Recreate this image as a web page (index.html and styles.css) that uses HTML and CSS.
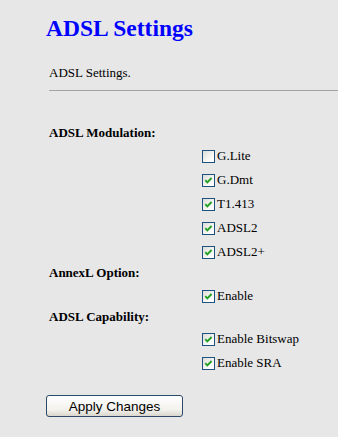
FILE: index.html
```html
<!DOCTYPE html>
<html lang="en">

<head>
    <meta charset="UTF-8">
    <title>ADSL Settings</title>
    <link rel="stylesheet" href="styles.css">
</head>

<body>
    <div class="page">
        <h1 class="title">ADSL Settings</h1>
        <p class="intro">ADSL Settings.</p>
        <div class="rule"></div>

        <form class="settings">
            <div class="field-label">ADSL Modulation:</div>
            <div class="options first">
                <label class="opt"><span class="box"></span>G.Lite</label>
                <label class="opt"><span class="box"><svg viewBox="0 0 11 11"><path d="M2.3 5.2 L4.3 7.3 L8.6 3"/></svg></span>G.Dmt</label>
                <label class="opt"><span class="box"><svg viewBox="0 0 11 11"><path d="M2.3 5.2 L4.3 7.3 L8.6 3"/></svg></span>T1.413</label>
                <label class="opt"><span class="box"><svg viewBox="0 0 11 11"><path d="M2.3 5.2 L4.3 7.3 L8.6 3"/></svg></span>ADSL2</label>
                <label class="opt"><span class="box"><svg viewBox="0 0 11 11"><path d="M2.3 5.2 L4.3 7.3 L8.6 3"/></svg></span>ADSL2+</label>
            </div>

            <div class="field-label short">AnnexL Option:</div>
            <div class="options">
                <label class="opt"><span class="box"><svg viewBox="0 0 11 11"><path d="M2.3 5.2 L4.3 7.3 L8.6 3"/></svg></span>Enable</label>
            </div>

            <div class="field-label short">ADSL Capability:</div>
            <div class="options tight">
                <label class="opt"><span class="box"><svg viewBox="0 0 11 11"><path d="M2.3 5.2 L4.3 7.3 L8.6 3"/></svg></span>Enable Bitswap</label>
                <label class="opt"><span class="box"><svg viewBox="0 0 11 11"><path d="M2.3 5.2 L4.3 7.3 L8.6 3"/></svg></span>Enable SRA</label>
            </div>

            <button type="button" class="apply">Apply Changes</button>
        </form>
    </div>
</body>

</html>
```

FILE: styles.css
```css
body {
    margin: 0;
    background-color: #e7e7e7;
    font-family: "Liberation Serif", "Times New Roman", serif;
    font-size: 13px;
    color: #000;
}

.page {
    padding: 15px 0 0 49px;
}

.title {
    margin: 0 0 0 -3px;
    font-size: 23.5px;
    line-height: 27px;
    font-weight: bold;
    color: #0000ff;
}

.intro {
    margin: 23px 0 0 0;
    line-height: 16px;
}

.rule {
    margin-top: 9px;
    border-top: 1px solid #a4a4a4;
}

.settings {
    margin: 32px 0 0 0;
}

.field-label {
    font-weight: bold;
    line-height: 20px;
    height: 20px;
}

.field-label.short {
    line-height: 18px;
    height: 18px;
}

.options {
    margin: 2px 0 0 153px;
}

.options.first {
    margin-top: 1px;
}

.options.tight {
    margin-top: 1px;
}

.opt {
    display: flex;
    align-items: center;
    height: 24px;
    line-height: 16px;
}

.box {
    display: inline-block;
    box-sizing: border-box;
    width: 13px;
    height: 13px;
    margin-right: 2px;
    border: 1px solid #1c5180;
    background: linear-gradient(135deg, #dcdcd7, #ffffff 80%);
}

.box svg {
    display: block;
    width: 11px;
    height: 11px;
}

.box path {
    fill: none;
    stroke: #21a121;
    stroke-width: 1.9;
}

.apply {
    display: block;
    margin: 20px 0 0 -3px;
    width: 137px;
    height: 22px;
    padding: 0;
    border: 1px solid #2d4a6a;
    border-radius: 3px;
    background: linear-gradient(#ffffff, #f2f1ec 70%, #d9d6cc);
    font-family: "Liberation Sans", Arial, sans-serif;
    font-size: 13.5px;
    color: #000;
}
```
